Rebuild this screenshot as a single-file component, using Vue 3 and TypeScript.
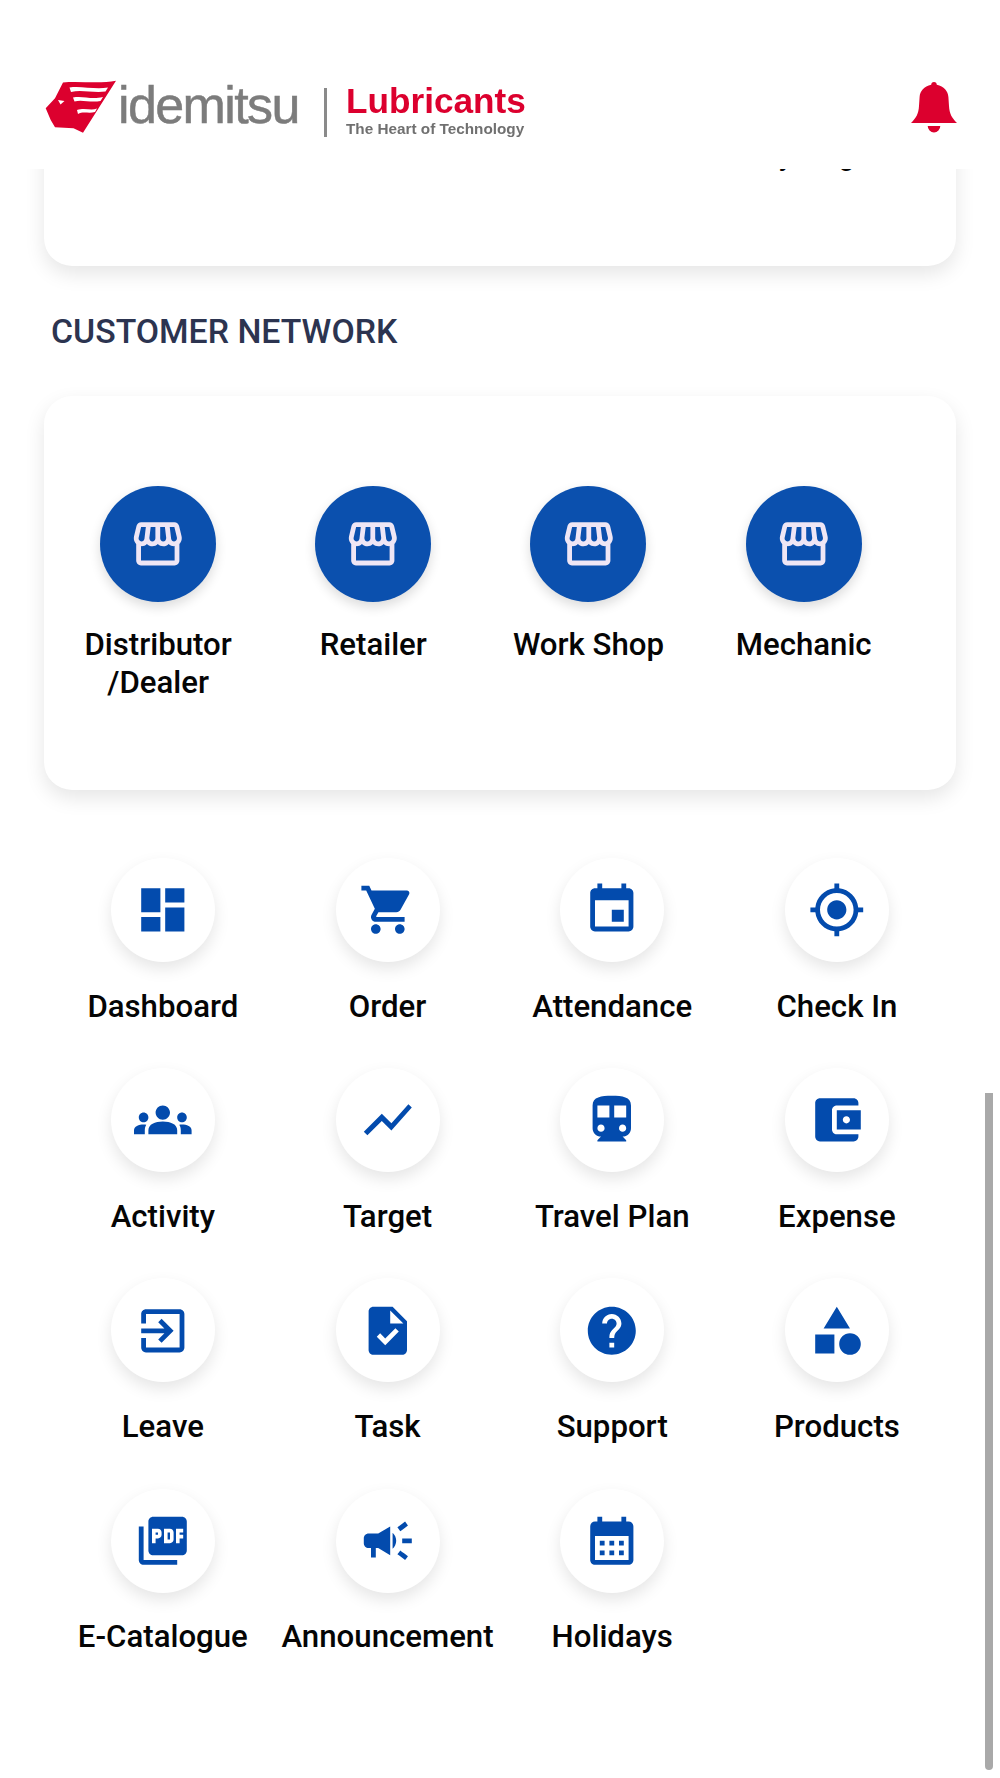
<script setup lang="ts">
interface MenuItem {
  label: string;
  path: string;
}

const storePath =
  "M21.9 8.89l-1.05-4.37c-.22-.9-1-1.52-1.91-1.52H5.05c-.9 0-1.69.63-1.9 1.52L2.1 8.89c-.24 1.02-.02 2.06.62 2.88.08.11.19.19.28.29V19c0 1.1.9 2 2 2h14c1.1 0 2-.9 2-2v-6.94c.09-.09.2-.18.28-.28.64-.82.87-1.87.62-2.89zm-2.99-3.9l1.05 4.37c.1.42.01.84-.25 1.17-.14.18-.44.47-.94.47-.61 0-1.14-.49-1.21-1.14L16.98 5l1.93-.01zM13 5h1.96l.54 4.52c.05.39-.07.78-.33 1.07-.22.26-.54.41-.95.41-.67 0-1.22-.59-1.22-1.31V5zM8.49 9.52L9.04 5H11v4.69c0 .72-.55 1.31-1.29 1.31-.34 0-.65-.15-.89-.41-.25-.29-.37-.68-.33-1.07zm-4.45-.16L5.05 5h1.97l-.58 4.86c-.08.65-.6 1.14-1.21 1.14-.49 0-.8-.29-.93-.47-.27-.32-.36-.75-.26-1.17zM5 19v-6.03c.08.01.15.03.23.03.87 0 1.66-.36 2.24-.95.6.6 1.4.95 2.31.95.87 0 1.65-.36 2.23-.93.59.57 1.39.93 2.29.93.84 0 1.64-.35 2.24-.95.58.59 1.37.95 2.24.95.08 0 .15-.02.23-.03V19H5z";

const networkItems: string[][] = [["Distributor", "/Dealer"], ["Retailer"], ["Work Shop"], ["Mechanic"]];

const menuItems: MenuItem[] = [
  { label: "Dashboard", path: "M3 13h8V3H3v10zm0 8h8v-6H3v6zm10 0h8V11h-8v10zm0-18v6h8V3h-8z" },
  {
    label: "Order",
    path: "M7 18c-1.1 0-1.99.9-1.99 2S5.9 22 7 22s2-.9 2-2-.9-2-2-2zM1 2v2h2l3.6 7.59-1.35 2.45c-.16.28-.25.61-.25.96 0 1.1.9 2 2 2h12v-2H7.42c-.14 0-.25-.11-.25-.25l.03-.12.9-1.63h7.45c.75 0 1.41-.41 1.75-1.03l3.58-6.49c.08-.14.12-.31.12-.48 0-.55-.45-1-1-1H5.21l-.94-2H1zm16 16c-1.1 0-1.99.9-1.99 2s.89 2 1.99 2 2-.9 2-2-.9-2-2-2z",
  },
  {
    label: "Attendance",
    path: "M17 12h-5v5h5v-5zM16 1v2H8V1H6v2H5c-1.11 0-1.99.9-1.99 2L3 19c0 1.1.89 2 2 2h14c1.1 0 2-.9 2-2V5c0-1.1-.9-2-2-2h-1V1h-2zm3 18H5V8h14v11z",
  },
  {
    label: "Check In",
    path: "M12 8c-2.21 0-4 1.79-4 4s1.79 4 4 4 4-1.79 4-4-1.79-4-4-4zm8.94 3c-.46-4.17-3.77-7.48-7.94-7.94V1h-2v2.06C6.83 3.52 3.52 6.83 3.06 11H1v2h2.06c.46 4.17 3.77 7.48 7.94 7.94V23h2v-2.06c4.17-.46 7.48-3.77 7.94-7.94H23v-2h-2.06zM12 19c-3.87 0-7-3.13-7-7s3.13-7 7-7 7 3.13 7 7-3.13 7-7 7z",
  },
  {
    label: "Activity",
    path: "M12 12.75c1.63 0 3.07.39 4.24.9 1.08.48 1.76 1.56 1.76 2.73V18H6v-1.61c0-1.18.68-2.26 1.76-2.73 1.17-.52 2.61-.91 4.24-.91zM4 13c1.1 0 2-.9 2-2s-.9-2-2-2-2 .9-2 2 .9 2 2 2zm1.13 1.1c-.37-.06-.74-.1-1.13-.1-.99 0-1.93.21-2.78.58C.48 14.9 0 15.62 0 16.43V18h4.5v-1.61c0-.83.23-1.61.63-2.29zM20 13c1.1 0 2-.9 2-2s-.9-2-2-2-2 .9-2 2 .9 2 2 2zm4 3.43c0-.81-.48-1.53-1.22-1.85-.85-.37-1.79-.58-2.78-.58-.39 0-.76.04-1.13.1.4.68.63 1.46.63 2.29V18H24v-1.57zM12 6c1.66 0 3 1.34 3 3s-1.34 3-3 3-3-1.34-3-3 1.34-3 3-3z",
  },
  { label: "Target", path: "M3.5 18.49l6-6.01 4 4L22 6.92l-1.41-1.41-7.09 7.97-4-4L2 16.99z" },
  {
    label: "Travel Plan",
    path: "M12 2c-4.42 0-8 .5-8 4v9.5C4 17.43 5.57 19 7.5 19L6 20.5v.5h12v-.5L16.5 19c1.93 0 3.5-1.57 3.5-3.5V6c0-3.5-3.58-4-8-4zM7.5 17c-.83 0-1.5-.67-1.5-1.5S6.67 14 7.5 14s1.5.67 1.5 1.5S8.33 17 7.5 17zm3.5-6H6V6h5v5zm5.5 6c-.83 0-1.5-.67-1.5-1.5s.67-1.5 1.5-1.5 1.5.67 1.5 1.5-.67 1.5-1.5 1.5zm1.5-6h-5V6h5v5z",
  },
  {
    label: "Expense",
    path: "M21 18v1c0 1.1-.9 2-2 2H5c-1.11 0-2-.9-2-2V5c0-1.1.89-2 2-2h14c1.1 0 2 .9 2 2v1h-9c-1.11 0-2 .9-2 2v8c0 1.1.89 2 2 2h9zm-9-2h10V8H12v8zm4-2.5c-.83 0-1.5-.67-1.5-1.5s.67-1.5 1.5-1.5 1.5.67 1.5 1.5-.67 1.5-1.5 1.5z",
  },
  {
    label: "Leave",
    path: "M10.09 15.59L11.5 17l5-5-5-5-1.41 1.41L12.67 11H3v2h9.67l-2.58 2.59zM19 3H5c-1.11 0-2 .9-2 2v4h2V5h14v14H5v-4H3v4c0 1.1.89 2 2 2h14c1.1 0 2-.9 2-2V5c0-1.1-.9-2-2-2z",
  },
  {
    label: "Task",
    path: "M14 2H6c-1.1 0-1.99.9-1.99 2L4 20c0 1.1.89 2 1.99 2H18c1.1 0 2-.9 2-2V8l-6-6zm-3.06 16L7.4 14.46l1.41-1.41 2.12 2.12 4.24-4.24 1.41 1.41L10.94 18zM13 9V3.5L18.5 9H13z",
  },
  {
    label: "Support",
    path: "M12 2C6.48 2 2 6.48 2 12s4.48 10 10 10 10-4.48 10-10S17.52 2 12 2zm1 17h-2v-2h2v2zm2.07-7.75l-.9.92C13.45 12.9 13 13.5 13 15h-2v-.5c0-1.1.45-2.1 1.17-2.83l1.24-1.26c.37-.36.59-.86.59-1.41 0-1.1-.9-2-2-2s-2 .9-2 2H8c0-2.21 1.79-4 4-4s4 1.79 4 4c0 .88-.36 1.68-.93 2.25z",
  },
  {
    label: "Products",
    path: "M12 2l-5.5 9h11zM17.5 13a4.5 4.5 0 1 0 0 9 4.5 4.5 0 0 0 0-9zM3 13.5h8v8H3z",
  },
  {
    label: "E-Catalogue",
    path: "M20 2H8c-1.1 0-2 .9-2 2v12c0 1.1.9 2 2 2h12c1.1 0 2-.9 2-2V4c0-1.1-.9-2-2-2zm-8.5 7.5c0 .83-.67 1.5-1.5 1.5H9v2H7.5V7H10c.83 0 1.5.67 1.5 1.5v1zm5 2c0 .83-.67 1.5-1.5 1.5h-2.5V7H15c.83 0 1.5.67 1.5 1.5v3zm4-3H19v1h1.5V11H19v2h-1.5V7h3v1.5zM9 9.5h1v-1H9v1zM4 6H2v14c0 1.1.9 2 2 2h14v-2H4V6zm10 5.5h1v-3h-1v3z",
  },
  {
    label: "Announcement",
    path: "M18 11v2h4v-2h-4zm-2 6.61c.96.71 2.21 1.65 3.2 2.39.4-.53.8-1.07 1.2-1.6-.99-.74-2.24-1.68-3.2-2.4-.4.54-.8 1.08-1.2 1.61zM20.4 5.6c-.4-.53-.8-1.07-1.2-1.6-.99.74-2.24 1.68-3.2 2.4.4.53.8 1.07 1.2 1.6.96-.72 2.21-1.65 3.2-2.4zM4 9c-1.1 0-2 .9-2 2v2c0 1.1.9 2 2 2h1v4h2v-4h1l5 3V6L8 9H4zm11.5 3c0-1.33-.58-2.53-1.5-3.35v6.69c.92-.81 1.5-2.01 1.5-3.34z",
  },
  {
    label: "Holidays",
    path: "M19 4h-1V2h-2v2H8V2H6v2H5c-1.11 0-1.99.9-1.99 2L3 20c0 1.1.89 2 2 2h14c1.1 0 2-.9 2-2V6c0-1.1-.9-2-2-2zm0 16H5V10h14v10zM9 14H7v-2h2v2zm4 0h-2v-2h2v2zm4 0h-2v-2h2v2zm-8 4H7v-2h2v2zm4 0h-2v-2h2v2zm4 0h-2v-2h2v2z",
  },
];
</script>

<template>
  <div class="page">
    <header class="top-bar">
      <div class="logo">
        <svg class="logo-head" viewBox="0 0 71 53" preserveAspectRatio="none">
          <path
            fill="#dc002e"
            d="M18 2.500C34 1 56 4 71 0.700L38 52.700 28.500 48.300 10 47.300 5.700 40 0.700 28.300 10 18.300Z"
          />
          <path
            fill="#fff"
            d="M24.500 7.500C36 5.500 50 10 63 7.500L60.500 11.500C48 13 36 9.500 26 12ZM28 17.500C38 15.500 46 20 58 17L55.500 21C45 23 37 19 29.500 21.500ZM32 30C40 27.500 46 31 52 28.500L50 32C44 34 38 31 33 34ZM13 20 19.500 21 15.500 24.500Z"
          />
        </svg>
        <span class="logo-word">idemitsu</span>
        <span class="logo-divider"></span>
        <div class="logo-brand">
          <span class="logo-brand-name">Lubricants</span>
          <span class="logo-brand-tag">The Heart of Technology</span>
        </div>
      </div>
      <svg class="bell" viewBox="0 0 46 51">
        <path
          d="M23 0c-1.800 0-2.800 1.200-2.800 2.800C13 4.500 9 9 8.600 15L8 24C7.600 32 5 36 0 41h46C41 36 38.400 32 38 24l-.6-9C37 9 33 4.500 25.800 2.800 25.800 1.200 24.800 0 23 0zM16.700 44h12.600a6.300 6.500 0 0 1-12.600 0z"
        />
      </svg>
    </header>

    <main class="content">
      <section class="card summary-card">
        <span class="summary-text">Monthly Target</span>
      </section>

      <h2 class="section-title">CUSTOMER NETWORK</h2>

      <section class="card network-card">
        <div v-for="item in networkItems" :key="item[0]" class="network-item">
          <div class="network-icon">
            <svg viewBox="0 0 24 24"><path :d="storePath" /></svg>
          </div>
          <div class="item-label">
            <div v-for="line in item" :key="line">{{ line }}</div>
          </div>
        </div>
      </section>

      <section class="menu-grid">
        <div v-for="item in menuItems" :key="item.label" class="menu-item">
          <div class="menu-icon">
            <svg viewBox="0 0 24 24"><path :d="item.path" /></svg>
          </div>
          <div class="item-label">{{ item.label }}</div>
        </div>
      </section>
    </main>

    <div class="scroll-thumb"></div>
  </div>
</template>

<style>
html,
body {
  background: #fff;
}
</style>

<style scoped>
.page {
  position: relative;
  height: 1778px;
  overflow: hidden;
  background: #fff;
  font-family: Roboto, "Liberation Sans", sans-serif;
}

.top-bar {
  position: absolute;
  top: 0;
  left: 0;
  right: 0;
  z-index: 2;
  height: 169px;
  padding: 80px 43px 0 45px;
  box-sizing: border-box;
  background: #fff;
  display: flex;
  justify-content: space-between;
  align-items: flex-start;
}

.logo {
  display: flex;
  align-items: flex-start;
  filter: blur(0.5px);
}

.logo-head {
  width: 71px;
  height: 53px;
  flex-shrink: 0;
}

.logo-word {
  margin: -3px 0 0 2px;
  width: 182px;
  font-family: "Liberation Sans", sans-serif;
  font-size: 52px;
  line-height: 56px;
  color: #7c7c7c;
  letter-spacing: -1.6px;
  -webkit-text-stroke: 0.5px #7c7c7c;
}

.logo-divider {
  margin: 8px 0 0 24px;
  width: 3px;
  height: 49px;
  background: #8a8a8a;
}

.logo-brand {
  margin: 4px 0 0 19px;
  display: flex;
  flex-direction: column;
}

.logo-brand-name {
  font-family: "Liberation Sans", sans-serif;
  font-weight: 700;
  font-size: 35.2px;
  line-height: 34px;
  color: #dc002e;
}

.logo-brand-tag {
  margin-top: 2px;
  font-family: "Liberation Sans", sans-serif;
  font-weight: 700;
  font-size: 15.3px;
  line-height: 18px;
  color: #707070;
  white-space: nowrap;
}

.bell {
  width: 46px;
  height: 51px;
  margin-top: 2px;
  fill: #dc002e;
}

.content {
  padding: 15px 44px 0;
}

.card {
  background: #fff;
  border-radius: 28px;
  box-shadow: 0 8px 20px rgba(0, 0, 0, 0.1);
}

.summary-card {
  height: 251px;
  box-sizing: border-box;
  padding: 123px 77px 0 0;
  text-align: right;
}

.summary-text {
  font-size: 28px;
  line-height: 36px;
  font-weight: 500;
  color: #050505;
}

.section-title {
  margin: 48px 0 0 7px;
  font-size: 33.8px;
  line-height: 36px;
  font-weight: 500;
  color: #2c3450;
  white-space: nowrap;
}

.network-card {
  margin-top: 46px;
  height: 394px;
  box-sizing: border-box;
  padding: 90px 6.5px 0;
  display: grid;
  grid-template-columns: repeat(4, 215.2px);
}

.network-item,
.menu-item {
  display: flex;
  flex-direction: column;
  align-items: center;
}

.network-icon {
  width: 116px;
  height: 116px;
  border-radius: 50%;
  background: #0b50ae;
  box-shadow: 0 5px 12px rgba(0, 0, 0, 0.14);
  display: flex;
  align-items: center;
  justify-content: center;
}

.network-icon svg {
  width: 57.6px;
  height: 57.6px;
  fill: #efe6f5;
}

.network-item .item-label {
  margin-top: 23.5px;
}

.item-label {
  font-size: 31.2px;
  line-height: 38.5px;
  font-weight: 500;
  color: #050505;
  text-align: center;
  white-space: nowrap;
}

.menu-grid {
  margin: 68px 6.5px 0;
  display: grid;
  grid-template-columns: repeat(4, 224.7px);
  grid-auto-rows: 210.2px;
}

.menu-icon {
  width: 104px;
  height: 104px;
  border-radius: 50%;
  background: #fff;
  box-shadow: 0 7px 16px rgba(0, 0, 0, 0.1);
  display: flex;
  align-items: center;
  justify-content: center;
}

.menu-icon svg {
  width: 57.6px;
  height: 57.6px;
  fill: #034bad;
}

.menu-item .item-label {
  margin-top: 25.5px;
}

.scroll-thumb {
  position: absolute;
  left: 985px;
  top: 1093px;
  width: 8px;
  height: 677px;
  border-radius: 0 0 4px 4px;
  background: #a9a9a9;
}
</style>
